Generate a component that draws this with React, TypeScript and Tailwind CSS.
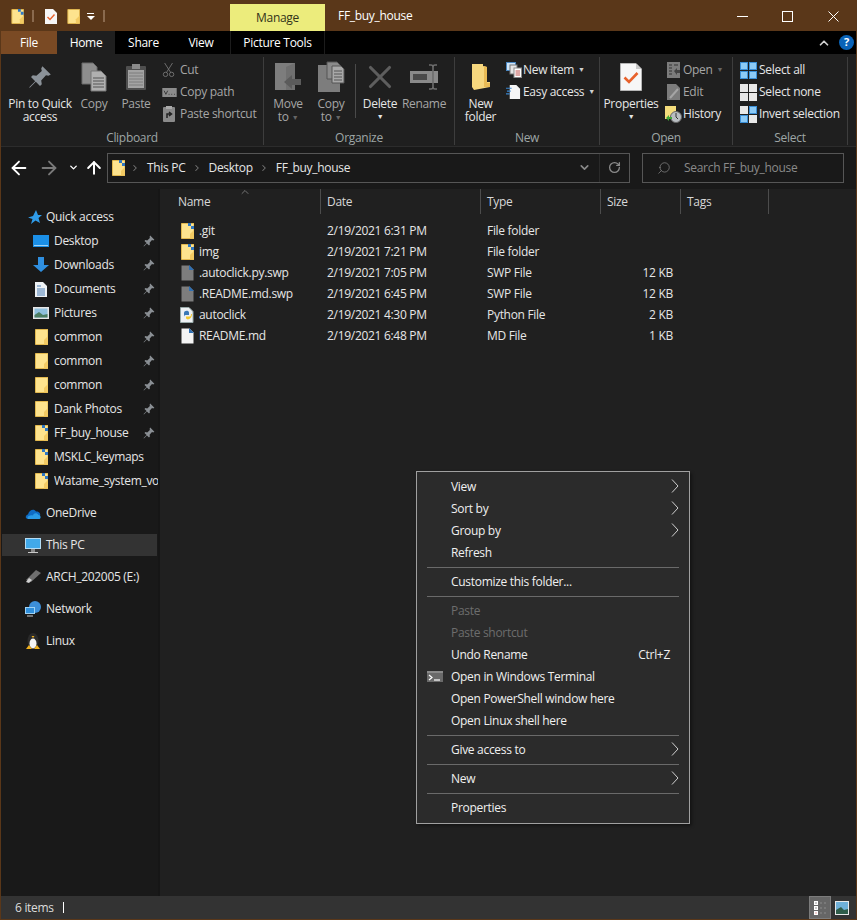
import type { ReactNode } from "react";
import { ArrowLeft, ArrowRight, ArrowUp, ChevronDown, ChevronRight, ChevronUp, RotateCw, Search, X } from "lucide-react";

// folder drawn as the tall yellow page explorer uses at this size
function Folder({ badge = false, className = "w-[13px] h-[16px]" }: { badge?: boolean; className?: string }) {
  return (
    <svg viewBox="0 0 13 16" className={className}>
      <path d="M0.5 0.5H13V15.5H0.5Z" fill="#fde38e" stroke="#e2b84e" />
      <path d="M9 11L13 7V15.5H9Z" fill="#f2ca63" />
      {badge && <path d="M7 0H10V3H13V6H10V3H7Z" fill="#2f78c4" />}
    </svg>
  );
}

function Page({ fill = "#f4f4f4", dog = "#2f6fb2" }: { fill?: string; dog?: string }) {
  return (
    <svg viewBox="0 0 13 16" className="w-[13px] h-[16px]">
      <path d="M0.5 0.5H8.5L12.5 4.5V15.5H0.5Z" fill={fill} />
      <path d="M8 0L13 5H8Z" fill={dog} />
    </svg>
  );
}

function PythonIcon() {
  return (
    <svg viewBox="0 0 14 16" className="w-[14px] h-[16px]">
      <path d="M0.5 0.5H9L13 4.5V15.5H0.5Z" fill="#eef1f4" stroke="#9aa" />
      <path d="M4 6C4 3 9 3 9 5.5V8H5.5C4.5 8 4 9 4 10Z" fill="#3c78b5" />
      <path d="M12 7C12 12 7 14 6 11V9.5H9.5C11 9.5 11 8 11 7Z" fill="#f4c92f" />
    </svg>
  );
}

function Pin({ className = "w-[12px] h-[12px]", fill = "#8a8f94" }: { className?: string; fill?: string }) {
  return (
    <svg viewBox="0 0 20 20" className={className}>
      <path d="M12 1L19 8L17 9L15 8.5L11 13L11.5 16L10 17.5L6.5 14L1.5 19L1 18.5L6 13.5L2.5 10L4 8.5L7 9L11.5 5L11 3Z" fill={fill} />
    </svg>
  );
}

function CopyIcon() {
  return (
    <svg viewBox="0 0 26 30" className="w-[26px] h-[30px]">
      <path d="M1 1H12L16 5V22H1Z" fill="#8d8d8d" stroke="#6a6a6a" />
      <path d="M10 9H20L25 14V29H10Z" fill="#b0b0b0" stroke="#777" />
      <path d="M12 16H23M12 19H23M12 22H23M12 25H23" stroke="#555" />
    </svg>
  );
}

function PasteIcon() {
  return (
    <svg viewBox="0 0 22 28" className="w-[22px] h-[28px]">
      <rect x="1" y="3" width="20" height="24" rx="1" fill="#4f4f4f" />
      <rect x="3" y="7" width="16" height="18" fill="#a3a3a3" />
      <path d="M4 10H18M4 13H18M4 16H18M4 19H18M4 22H18" stroke="#7c7c7c" />
      <rect x="7" y="1" width="8" height="5" fill="#8a8a8a" />
    </svg>
  );
}

function MoveIcon() {
  return (
    <svg viewBox="0 0 28 30" className="w-[28px] h-[30px]">
      <path d="M1 1H21V28H1Z" fill="#7d7d7d" />
      <path d="M21 1L12 5V28H21Z" fill="#707070" />
      <path d="M10 20L18 13V17H27V23H18V27Z" fill="#5b5b5b" />
    </svg>
  );
}

function CopyToIcon() {
  return (
    <svg viewBox="0 0 28 32" className="w-[28px] h-[32px]">
      <path d="M1 4H23V31H1Z" fill="#7d7d7d" />
      <path d="M10 1H20L24 5V18H10Z" fill="#8a8a8a" stroke="#555" />
      <path d="M15 5H24L27 8V22H15Z" fill="#a8a8a8" stroke="#555" />
      <path d="M17 10H25M17 13H25M17 16H25M17 19H25" stroke="#555" />
    </svg>
  );
}

function RenameIcon() {
  return (
    <svg viewBox="0 0 30 28" className="w-[30px] h-[28px]">
      <rect x="1" y="8" width="28" height="12" fill="#8a8a8a" />
      <rect x="4" y="11" width="14" height="6" fill="#4a4a4a" />
      <path d="M20 2H22C23 2 24 3 24 4V24C24 25 23 26 22 26H20M28 2H26C25 2 24 3 24 4M28 26H26C25 26 24 25 24 24" stroke="#6d6d6d" strokeWidth="1.6" fill="none" />
    </svg>
  );
}

function NewFolderIcon() {
  return (
    <svg viewBox="0 0 20 28" className="w-[20px] h-[28px]">
      <path d="M1 1H12V3L16 4V19H19V24L3 27L1 24Z" fill="#f6d77e" />
      <path d="M16 4V20H19V24H13V3Z" fill="#e9bb55" />
    </svg>
  );
}

function PropertiesIcon() {
  return (
    <svg viewBox="0 0 22 28" className="w-[22px] h-[28px]">
      <path d="M0.5 0.5H16L21.5 6V27.5H0.5Z" fill="#f7f7f7" stroke="#b5b5b5" />
      <path d="M16 0.5V6H21.5Z" fill="#c9c9c9" />
      <path d="M4.5 14.5L9 19L17.5 10" stroke="#e8622c" strokeWidth="2.6" fill="none" />
    </svg>
  );
}

function Small({ kind }: { kind: string }) {
  switch (kind) {
    case "cut":
      return (
        <svg viewBox="0 0 16 16" className="w-[14px] h-[16px]">
          <path d="M3 0L10 11M12 0L5 11" stroke="#777" fill="none" />
          <circle cx="4" cy="13" r="2.5" stroke="#777" fill="none" />
          <circle cx="11" cy="13" r="2.5" stroke="#777" fill="none" />
        </svg>
      );
    case "copypath":
      return (
        <svg viewBox="0 0 16 10" className="w-[15px] h-[9px]">
          <rect width="16" height="10" fill="#8c8c8c" />
          <path d="M2 3L4 7L6 3M7 7H8M10 7H11M13 7H14" stroke="#333" fill="none" />
        </svg>
      );
    case "pasteshort":
      return (
        <svg viewBox="0 0 12 16" className="w-[12px] h-[16px]">
          <rect y="1" width="12" height="15" rx="1" fill="#8a8a8a" />
          <rect x="3" y="0" width="6" height="3" fill="#aaa" />
          <path d="M4 12V8H8M6 6L8.5 8L6 10" stroke="#222" fill="none" strokeWidth="1.5" />
        </svg>
      );
    case "newitem":
      return (
        <svg viewBox="0 0 16 16" className="w-[16px] h-[16px]">
          <rect x="0.5" y="0.5" width="9" height="8" fill="#cfe4f7" stroke="#4a86c0" />
          <rect x="4" y="3" width="7" height="9" fill="#e6e6e6" stroke="#777" />
          <rect x="8" y="6" width="7.5" height="9.5" fill="#fff" stroke="#888" />
          <path d="M9.5 9H14M9.5 11H14M9.5 13H14" stroke="#c0504d" />
        </svg>
      );
    case "easy":
      return (
        <svg viewBox="0 0 16 16" className="w-[15px] h-[16px]">
          <path d="M4 0.5H11L15 4.5V15.5H4Z" fill="#f6f6f6" />
          <path d="M0 4H6M1 7H5M0 10H4" stroke="#3b87cf" strokeWidth="1.2" />
        </svg>
      );
    case "open":
      return (
        <svg viewBox="0 0 13 16" className="w-[13px] h-[16px]">
          <rect width="13" height="16" fill="#7c7c7c" />
          <path d="M2 3H5M7 3H11M2 6H5M2 9H5M2 12H5" stroke="#333" />
          <path d="M7 9L10 6V8H13V11H10V13Z" fill="#444" />
        </svg>
      );
    case "edit":
      return (
        <svg viewBox="0 0 13 16" className="w-[13px] h-[16px]">
          <path d="M0 0H9L13 4V16H0Z" fill="#7c7c7c" />
          <path d="M3 14L11 5" stroke="#a5a5a5" strokeWidth="2" />
        </svg>
      );
    case "history":
      return (
        <svg viewBox="0 0 17 17" className="w-[17px] h-[17px]">
          <rect width="11" height="13" fill="#f4dc7c" />
          <circle cx="11" cy="11" r="5.5" fill="#b9bec2" stroke="#666" />
          <path d="M11 7V11L13 13" stroke="#333" fill="none" />
          <path d="M1 12L4 9V11H7V13H4V15Z" fill="#3fa535" />
        </svg>
      );
    default:
      return null;
  }
}

const blueCell = "bg-[#8ccaf6] border border-[#3a8fd8]";
const whiteCell = "bg-[#e8e8e8]";

function SelectGrid({ cells }: { cells: string[] }) {
  return (
    <div className="grid grid-cols-2 gap-[1px] w-[17px] h-[17px] mr-[2px]">
      {cells.map((c, i) => (
        <div key={i} className={c} />
      ))}
    </div>
  );
}

function BigBtn({ icon, label, width, dim, caret, dimCaret }: { icon: ReactNode; label: string[]; width: string; dim?: boolean; caret?: boolean; dimCaret?: boolean }) {
  return (
    <div className={`flex flex-col items-center shrink-0 ${width}`}>
      <div className="h-[40px] flex items-center justify-center">{icon}</div>
      {label.map((l, i) => (
        <div key={i} className={`leading-[13px] whitespace-nowrap ${dim ? "text-[#a6a6a6]" : "text-[#e6e6e6]"}`}>
          {l}
          {i === label.length - 1 && dimCaret && <span className="text-[#666] text-[7px] ml-[3px] align-middle">▼</span>}
        </div>
      ))}
      {caret && <div className="text-[#e6e6e6] text-[7px] leading-[13px]">▼</div>}
    </div>
  );
}

function SmallBtn({ icon, label, dim, caret, iconWidth }: { icon: ReactNode; label: string; dim?: boolean; caret?: "on" | "off"; iconWidth: string }) {
  return (
    <div className="flex items-center h-[22px] whitespace-nowrap">
      <div className={`flex items-center justify-center shrink-0 ${iconWidth}`}>{icon}</div>
      <span className={dim ? "text-[#a6a6a6]" : "text-[#e6e6e6]"}>{label}</span>
      {caret && <span className={`text-[7px] ml-[4px] ${caret === "on" ? "text-[#d0d0d0]" : "text-[#666]"}`}>▼</span>}
    </div>
  );
}

function Group({ title, width, children }: { title: string; width: string; children: ReactNode }) {
  return (
    <div className={`flex flex-col shrink-0 border-r border-[#3d3d3d] h-[88px] ${width}`}>
      <div className="flex h-[74px] shrink-0">{children}</div>
      <div className="h-[14px] text-center text-[#9ea6a6] leading-[14px]">{title}</div>
    </div>
  );
}

const quick: { label: string; icon: ReactNode; pin?: boolean }[] = [
  {
    label: "Desktop",
    pin: true,
    icon: (
      <svg viewBox="0 0 16 12" className="w-[16px] h-[12px]">
        <rect width="16" height="12" fill="#1b8fe6" />
        <path d="M1 10.5H15" stroke="#9fd4f7" />
      </svg>
    ),
  },
  {
    label: "Downloads",
    pin: true,
    icon: (
      <svg viewBox="0 0 16 16" className="w-[16px] h-[16px]">
        <path d="M5 0H11V8H16L8 15L0 8H5Z" fill="#2f8fe0" />
      </svg>
    ),
  },
  {
    label: "Documents",
    pin: true,
    icon: (
      <svg viewBox="0 0 12 15" className="w-[12px] h-[15px]">
        <path d="M0 0H8L12 4V15H0Z" fill="#eef2f5" />
        <path d="M2 4H6M2 7H10M2 9H10M2 11H10M2 13H10" stroke="#4d7fb5" />
      </svg>
    ),
  },
  {
    label: "Pictures",
    pin: true,
    icon: (
      <svg viewBox="0 0 16 12" className="w-[16px] h-[12px]">
        <rect width="16" height="12" fill="#e6e6e6" />
        <rect x="1.5" y="1.5" width="13" height="9" fill="#8fc0de" />
        <path d="M1.5 8L6 5L10 8L14.5 7V10.5H1.5Z" fill="#4c7d62" />
      </svg>
    ),
  },
  { label: "common", pin: true, icon: <Folder /> },
  { label: "common", pin: true, icon: <Folder /> },
  { label: "common", pin: true, icon: <Folder /> },
  { label: "Dank Photos", pin: true, icon: <Folder /> },
  { label: "FF_buy_house", pin: true, icon: <Folder badge /> },
  { label: "MSKLC_keymaps", icon: <Folder badge /> },
  { label: "Watame_system_voice", icon: <Folder badge /> },
];

const roots: { label: string; icon: ReactNode; active?: boolean }[] = [
  {
    label: "OneDrive",
    icon: (
      <svg viewBox="0 0 16 11" className="w-[16px] h-[11px]">
        <path d="M3 11C0 11 0 7 3 6.5C4 2 9 0 11 3.5C14 3 16 6 15 8L7 11Z" fill="#0f6cc4" />
        <path d="M3 11H14C16 11 16.5 7.5 13.5 7C12 4.5 8.5 5 8 7.5C5 6.5 1 9 3 11Z" fill="#2a9be6" />
      </svg>
    ),
  },
  {
    label: "This PC",
    active: true,
    icon: (
      <svg viewBox="0 0 16 15" className="w-[16px] h-[15px]">
        <rect width="16" height="11" fill="#b4dcf5" />
        <rect x="1" y="1" width="14" height="9" fill="#41a9ea" />
        <path d="M3 14H13V15H3Z" fill="#c8c8c8" />
        <rect x="6" y="11" width="4" height="3" fill="#8a8a8a" />
      </svg>
    ),
  },
  {
    label: "ARCH_202005 (E:)",
    icon: (
      <svg viewBox="0 0 16 14" className="w-[16px] h-[14px]">
        <path d="M11 0L16 3L6 12L1 10Z" fill="#6f6f6f" />
        <path d="M4 8L7 10L4 13L1 12Z" fill="#d0d0d0" />
      </svg>
    ),
  },
  {
    label: "Network",
    icon: (
      <svg viewBox="0 0 16 16" className="w-[16px] h-[16px]">
        <circle cx="10" cy="6" r="6" fill="#3d8fd9" />
        <rect y="6" width="10" height="7" fill="#9fd2f4" />
        <rect x="1" y="7" width="8" height="5" fill="#2f8fdc" />
        <path d="M2 15H8" stroke="#ccc" />
      </svg>
    ),
  },
  {
    label: "Linux",
    icon: (
      <svg viewBox="0 0 16 18" className="w-[16px] h-[18px]">
        <ellipse cx="8" cy="9" rx="5.5" ry="8" fill="#2a2a2a" />
        <ellipse cx="8" cy="11.5" rx="3.5" ry="5" fill="#f4f4f4" />
        <path d="M1 17L4 13L7 17ZM15 17L12 13L9 17Z" fill="#f0b01e" />
        <path d="M6.5 4H9.5L8 6Z" fill="#f0b01e" />
      </svg>
    ),
  },
];

const files: { name: string; date: string; type: string; size?: string; icon: ReactNode }[] = [
  { name: ".git", date: "2/19/2021 6:31 PM", type: "File folder", icon: <Folder badge /> },
  { name: "img", date: "2/19/2021 7:21 PM", type: "File folder", icon: <Folder badge /> },
  { name: ".autoclick.py.swp", date: "2/19/2021 7:05 PM", type: "SWP File", size: "12 KB", icon: <Page fill="#7d7d7d" /> },
  { name: ".README.md.swp", date: "2/19/2021 6:45 PM", type: "SWP File", size: "12 KB", icon: <Page fill="#7d7d7d" /> },
  { name: "autoclick", date: "2/19/2021 4:30 PM", type: "Python File", size: "2 KB", icon: <PythonIcon /> },
  { name: "README.md", date: "2/19/2021 6:48 PM", type: "MD File", size: "1 KB", icon: <Page /> },
];

type MenuRow = { label: string; sub?: boolean; off?: boolean; shortcut?: string; term?: boolean } | "sep";

const menu: MenuRow[] = [
  { label: "View", sub: true },
  { label: "Sort by", sub: true },
  { label: "Group by", sub: true },
  { label: "Refresh" },
  "sep",
  { label: "Customize this folder..." },
  "sep",
  { label: "Paste", off: true },
  { label: "Paste shortcut", off: true },
  { label: "Undo Rename", shortcut: "Ctrl+Z" },
  { label: "Open in Windows Terminal", term: true },
  { label: "Open PowerShell window here" },
  { label: "Open Linux shell here" },
  "sep",
  { label: "Give access to", sub: true },
  "sep",
  { label: "New", sub: true },
  "sep",
  { label: "Properties" },
];

const columns = [
  { label: "Name", className: "w-[161px] pl-[18px]" },
  { label: "Date", className: "w-[160px] pl-[6px]" },
  { label: "Type", className: "w-[120px] pl-[6px]" },
  { label: "Size", className: "w-[80px] pl-[6px]" },
  { label: "Tags", className: "w-[88px] pl-[6px]" },
];

export default function App() {
  return (
    <div className="relative w-[857px] h-[920px] overflow-hidden bg-[#5a3719] p-[1px] text-[12px] text-[#e6e6e6] font-['Open_Sans','Liberation_Sans',sans-serif] tracking-[-0.3px] flex flex-col">
      {/* title bar */}
      <div className="h-[30px] flex items-center shrink-0 relative">
        <div className="flex items-center w-[229px] pl-[10px]">
          <Folder badge className="w-[13px] h-[15px]" />
          <div className="w-[2px] h-[12px] bg-[#8a6a4e] ml-[8px] mr-[11px]" />
          <svg viewBox="0 0 12 15" className="w-[12px] h-[15px]">
            <path d="M0 0H8L12 4V15H0Z" fill="#f6f6f6" />
            <path d="M2.5 8L5 10.5L9.5 5.5" stroke="#e8622c" strokeWidth="1.4" fill="none" />
          </svg>
          <Folder className="w-[13px] h-[15px] ml-[10px]" />
          <div className="ml-[7px] w-[7px] flex flex-col items-center gap-[2px]">
            <div className="w-[7px] h-[1px] bg-white" />
            <div className="w-0 h-0 border-x-[4px] border-x-transparent border-t-[4px] border-t-white" />
          </div>
          <div className="w-[2px] h-[12px] bg-[#8a6a4e] ml-[9px]" />
        </div>
        <div className="w-[95px] h-[27px] mt-[3px] bg-[#ecec7c] text-[#33331a] flex items-center justify-center">Manage</div>
        <div className="ml-[13px] text-white">FF_buy_house</div>
        <div className="ml-auto flex items-center">
          <svg viewBox="0 0 11 11" className="w-[11px] h-[11px] mr-[34px]">
            <path d="M0 5.5H11" stroke="#fff" />
          </svg>
          <svg viewBox="0 0 11 11" className="w-[11px] h-[11px] mr-[35px]">
            <rect x="0.5" y="0.5" width="10" height="10" stroke="#fff" fill="none" />
          </svg>
          <svg viewBox="0 0 11 11" className="w-[11px] h-[11px] mr-[17px]">
            <path d="M0.5 0.5L10.5 10.5M10.5 0.5L0.5 10.5" stroke="#fff" />
          </svg>
        </div>
      </div>

      {/* tabs */}
      <div className="h-[23px] bg-black flex items-stretch shrink-0 text-white">
        <div className="w-[56px] bg-[#7a4a24] flex items-center justify-center">File</div>
        <div className="w-[58px] bg-[#1f1f1f] flex items-center justify-center">Home</div>
        <div className="w-[57px] flex items-center justify-center">Share</div>
        <div className="w-[58px] flex items-center justify-center">View</div>
        <div className="w-[95px] flex items-center justify-center border-x border-[#1c1c1c]">Picture Tools</div>
        <div className="ml-auto flex items-center pr-[2px]">
          <ChevronUp size={14} strokeWidth={3} className="mr-[8px] text-[#d0d0d0]" />
          <div className="w-[15px] h-[15px] rounded-full bg-[#0a63b8] text-white font-bold text-[11px] flex items-center justify-center">?</div>
        </div>
      </div>

      {/* ribbon */}
      <div className="h-[92px] bg-[#1f1f1f] flex pt-[3px] pb-[1px] shrink-0">
        <Group title="Clipboard" width="w-[263px]">
          <div className="w-[6px]" />
          <BigBtn width="w-[66px]" label={["Pin to Quick", "access"]} icon={<Pin className="w-[24px] h-[24px]" fill="#8b9299" />} />
          <BigBtn width="w-[42px]" dim label={["Copy"]} icon={<CopyIcon />} />
          <BigBtn width="w-[42px]" dim label={["Paste"]} icon={<PasteIcon />} />
          <div className="flex flex-col pt-[2px] ml-[1px]">
            <SmallBtn iconWidth="w-[22px]" dim label="Cut" icon={<Small kind="cut" />} />
            <SmallBtn iconWidth="w-[22px]" dim label="Copy path" icon={<Small kind="copypath" />} />
            <SmallBtn iconWidth="w-[22px]" dim label="Paste shortcut" icon={<Small kind="pasteshort" />} />
          </div>
        </Group>
        <Group title="Organize" width="w-[191px]">
          <div className="w-[2px]" />
          <BigBtn width="w-[44px]" dim dimCaret label={["Move", "to"]} icon={<MoveIcon />} />
          <BigBtn width="w-[42px]" dim dimCaret label={["Copy", "to"]} icon={<CopyToIcon />} />
          <div className="w-[1px] h-[54px] bg-[#4a4a4a] mt-[7px] mx-[3px]" />
          <BigBtn width="w-[42px]" label={["Delete"]} caret icon={<X size={38} strokeWidth={2} className="text-[#5e5e5e]" />} />
          <BigBtn width="w-[46px]" dim label={["Rename"]} icon={<RenameIcon />} />
        </Group>
        <Group title="New" width="w-[145px]">
          <div className="w-[2px]" />
          <BigBtn width="w-[47px]" label={["New", "folder"]} icon={<NewFolderIcon />} />
          <div className="flex flex-col pt-[2px]">
            <SmallBtn iconWidth="w-[19px]" label="New item" caret="on" icon={<Small kind="newitem" />} />
            <SmallBtn iconWidth="w-[19px]" label="Easy access" caret="on" icon={<Small kind="easy" />} />
          </div>
        </Group>
        <Group title="Open" width="w-[133px]">
          <BigBtn width="w-[62px]" label={["Properties"]} caret icon={<PropertiesIcon />} />
          <div className="flex flex-col pt-[2px] ml-[2px]">
            <SmallBtn iconWidth="w-[19px]" dim label="Open" caret="off" icon={<Small kind="open" />} />
            <SmallBtn iconWidth="w-[19px]" dim label="Edit" icon={<Small kind="edit" />} />
            <SmallBtn iconWidth="w-[19px]" label="History" icon={<Small kind="history" />} />
          </div>
        </Group>
        <Group title="Select" width="w-[115px]">
          <div className="flex flex-col pt-[2px] pl-[6px]">
            <SmallBtn iconWidth="w-[20px]" label="Select all" icon={<SelectGrid cells={[blueCell, blueCell, blueCell, blueCell]} />} />
            <SmallBtn iconWidth="w-[20px]" label="Select none" icon={<SelectGrid cells={[whiteCell, whiteCell, whiteCell, whiteCell]} />} />
            <SmallBtn iconWidth="w-[20px]" label="Invert selection" icon={<SelectGrid cells={[whiteCell, blueCell, blueCell, whiteCell]} />} />
          </div>
        </Group>
      </div>

      {/* address bar */}
      <div className="h-[43px] bg-[#191919] flex items-center shrink-0 border-t border-[#2c2c2c] pb-[1px]">
        <div className="w-[106px] flex items-center text-white shrink-0">
          <ArrowLeft size={22} strokeWidth={2} className="ml-[7px]" />
          <ArrowRight size={22} strokeWidth={2} className="ml-[8px] text-[#7a7a7a]" />
          <ChevronDown size={11} strokeWidth={3} className="ml-[8px]" />
          <ArrowUp size={20} strokeWidth={2.4} className="ml-[5px]" />
        </div>
        <div className="w-[523px] h-[30px] border border-[#565656] flex items-center shrink-0">
          <Folder badge className="w-[13px] h-[16px] ml-[4px]" />
          <ChevronRight size={10} strokeWidth={2.5} className="ml-[5px] text-[#777]" />
          <span className="ml-[7px]">This PC</span>
          <ChevronRight size={10} strokeWidth={2.5} className="ml-[6px] text-[#777]" />
          <span className="ml-[7px]">Desktop</span>
          <ChevronRight size={10} strokeWidth={2.5} className="ml-[6px] text-[#777]" />
          <span className="ml-[7px]">FF_buy_house</span>
          <ChevronDown size={13} strokeWidth={3} className="ml-auto mr-[8px] text-[#8a8a8a]" />
          <div className="w-[1px] h-[28px] bg-[#2a2a2a]" />
          <RotateCw size={13} strokeWidth={2.4} className="ml-[8px] mr-[8px] text-[#8a8a8a]" />
        </div>
        <div className="ml-[12px] w-[202px] h-[30px] border border-[#565656] flex items-center text-[#8a8a8a] shrink-0">
          <Search size={14} strokeWidth={1.2} className="ml-[14px] -scale-x-100" />
          <span className="ml-[13px]">Search FF_buy_house</span>
        </div>
      </div>

      {/* body */}
      <div className="flex-1 flex min-h-0">
        <div className="w-[157px] bg-[#191919] pt-[16px] shrink-0 overflow-hidden">
          <div className="h-[24px] flex items-center pl-[27px] whitespace-nowrap">
            <svg viewBox="0 0 14 14" className="w-[14px] h-[14px] mr-[4px]">
              <path d="M8 0L10 5L14 5L10.5 8L12 13L7.5 10.5L3 14L4.5 9L0 7.5L5 6Z" fill="#2f9be8" />
            </svg>
            Quick access
          </div>
          {quick.map((q, i) => (
            <div key={i} className="h-[24px] flex items-center whitespace-nowrap">
              <div className="w-[53px] shrink-0 flex justify-center pl-[27px]">{q.icon}</div>
              <span className="flex-1 overflow-hidden">{q.label}</span>
              {q.pin && <Pin className="w-[12px] h-[12px] mr-[3px] shrink-0 ml-[2px]" />}
            </div>
          ))}
          <div className="h-[9px]" />
          {roots.map((r) => (
            <div key={r.label} className={`h-[22px] mb-[10px] flex items-center whitespace-nowrap ml-[1px] mr-[1px] ${r.active ? "bg-[#333333]" : ""}`}>
              <div className="w-[44px] shrink-0 flex justify-center pl-[17px]">{r.icon}</div>
              {r.label}
            </div>
          ))}
        </div>
        <div className="w-[2px] bg-[#161616] shrink-0" />
        <div className="flex-1 bg-[#202020] min-w-0">
          <div className="h-[25px] flex relative">
            <ChevronUp size={12} strokeWidth={1.2} className="absolute left-[79px] -top-[3px] text-[#aaa]" />
            {columns.map((c) => (
              <div key={c.label} className={`flex items-center border-r border-[#4c4c4c] pt-[1px] text-[#d8d8d8] ${c.className}`}>
                {c.label}
              </div>
            ))}
          </div>
          <div className="pt-[6px]">
            {files.map((f) => (
              <div key={f.name} className="h-[21px] flex items-center whitespace-nowrap">
                <div className="w-[39px] shrink-0 flex justify-center pl-[15px]">{f.icon}</div>
                <div className="w-[128px] shrink-0">{f.name}</div>
                <div className="w-[160px] shrink-0">{f.date}</div>
                <div className="w-[120px] shrink-0">{f.type}</div>
                <div className="w-[66px] shrink-0 text-right">{f.size}</div>
              </div>
            ))}
          </div>
        </div>
      </div>

      {/* status bar */}
      <div className="h-[23px] bg-[#333333] flex items-center shrink-0">
        <span className="ml-[14px] text-[#dcdcdc]">6 items</span>
        <div className="w-[1px] h-[11px] bg-white ml-[9px]" />
        <div className="ml-auto w-[22px] h-[23px] bg-[#666] border border-[#7c7c7c] flex items-center justify-center">
          <svg viewBox="0 0 14 16" className="w-[14px] h-[16px]">
            <path d="M1 1H5V5H1ZM1 6H5V10H1ZM1 11H5V15H1Z" fill="#fff" />
            <path d="M2.5 2.5H3.5V3.5H2.5ZM2.5 7.5H3.5V8.5H2.5Z" fill="#333" />
            <path d="M2.5 12.5H3.5V13.5H2.5Z" fill="#c44" />
            <path d="M7 3H9M11 3H13M7 8H9M11 8H13M7 13H9M11 13H13" stroke="#8c8c8c" />
          </svg>
        </div>
        <svg viewBox="0 0 14 14" className="w-[14px] h-[14px] ml-[4px] mr-[7px]">
          <rect width="14" height="14" fill="#e8e8e8" />
          <rect x="1" y="1" width="12" height="12" fill="#6fb0d8" />
          <path d="M1 9L6 6L9 9L13 8V13H1Z" fill="#2f5d4a" />
        </svg>
      </div>

      {/* context menu */}
      <div className="absolute left-[416px] top-[471px] w-[274px] h-[353px] bg-[#2b2b2b] border border-[#a0a0a0] py-[3px] px-[10px] text-[#f0f0f0] shadow-[2px_2px_3px_rgba(0,0,0,0.4)]">
        {menu.map((m, i) =>
          m === "sep" ? (
            <div key={i} className="h-[7px] flex items-center"><div className="w-full h-[1px] bg-[#6a6a6a] mt-[1px]" /></div>
          ) : (
            <div key={i} className={`h-[22px] flex items-center pl-[24px] pt-[2px] relative ${m.off ? "text-[#6d6d6d]" : ""}`}>
              {m.term && (
                <svg viewBox="0 0 16 11" className="absolute left-0 top-[6px] w-[16px] h-[11px]">
                  <rect width="16" height="11" fill="#6a6a6a" />
                  <rect width="16" height="2" fill="#8a8a8a" />
                  <path d="M2 4L5 6.5L2 9" stroke="#fff" fill="none" strokeWidth="1.2" />
                  <path d="M7 9H13" stroke="#fff" strokeWidth="1.2" />
                </svg>
              )}
              <span>{m.label}</span>
              {m.shortcut && <span className="ml-auto mr-[9px]">{m.shortcut}</span>}
              {m.sub && (
                <svg viewBox="0 0 8 14" className="absolute right-0 top-[4px] w-[8px] h-[14px]">
                  <path d="M1 0.5L7 7L1 13.5" stroke="#d0d0d0" fill="none" />
                </svg>
              )}
            </div>
          )
        )}
      </div>
    </div>
  );
}
